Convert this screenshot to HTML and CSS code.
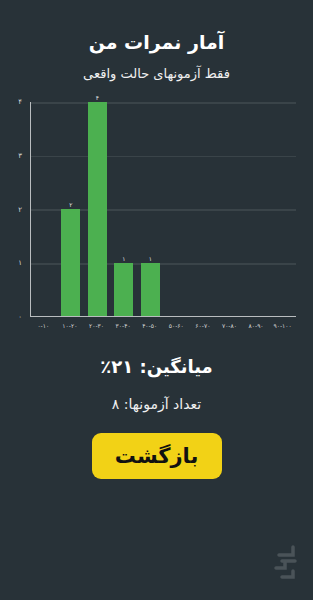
FILE: index.html
```html
<!DOCTYPE html>
<html lang="fa">
<head>
<meta charset="utf-8">
<link rel="stylesheet" href="styles.css">
</head>
<body>
<main class="screen" dir="rtl">
  <h1 class="title">آمار نمرات من</h1>
  <p class="subtitle">فقط آزمونهای حالت واقعی</p>

  <section class="chart" dir="ltr">
    <div class="yaxis">
      <span>۴</span><span>۳</span><span>۲</span><span>۱</span><span>۰</span>
    </div>
    <div class="plot">
      <div class="bin"></div>
      <div class="bin"><div class="bar" style="height:50%"><span class="val">۲</span></div></div>
      <div class="bin"><div class="bar" style="height:100%"><span class="val">۴</span></div></div>
      <div class="bin"><div class="bar" style="height:25%"><span class="val">۱</span></div></div>
      <div class="bin"><div class="bar" style="height:25%"><span class="val">۱</span></div></div>
      <div class="bin"></div>
      <div class="bin"></div>
      <div class="bin"></div>
      <div class="bin"></div>
      <div class="bin"></div>
    </div>
    <div class="xaxis">
      <span>۰-۱۰</span><span>۱۰-۲۰</span><span>۲۰-۳۰</span><span>۳۰-۴۰</span><span>۴۰-۵۰</span>
      <span>۵۰-۶۰</span><span>۶۰-۷۰</span><span>۷۰-۸۰</span><span>۸۰-۹۰</span><span>۹۰-۱۰۰</span>
    </div>
  </section>

  <p class="avg">میانگین: ۲۱٪</p>
  <p class="count">تعداد آزمونها: ۸</p>
  <button class="back">بازگشت</button>

  <svg class="watermark" width="28" height="40" viewBox="0 0 28 40" aria-hidden="true">
    <g fill="none" stroke="#4a5358" stroke-width="3.5" stroke-linecap="round">
      <path d="M20 4 V12 H6"/>
      <path d="M22 18 H9"/>
      <path d="M12 19 V25 H3"/>
      <path d="M20 28 V34 H9"/>
    </g>
  </svg>
</main>
</body>
</html>
```

FILE: styles.css
```css
html, body {
  margin: 0;
  padding: 0;
  background: #283238;
}
body {
  font-family: "DejaVu Sans", "Noto Sans", sans-serif;
  color: #ffffff;
}
.screen {
  position: relative;
  width: 313px;
  height: 600px;
  display: flex;
  flex-direction: column;
  align-items: center;
  overflow: hidden;
}
.title {
  margin: 27px 0 0;
  font-size: 19px;
  line-height: 30px;
  font-weight: bold;
}
.subtitle {
  margin: 8px 0 0;
  font-size: 13px;
  line-height: 18px;
  color: #f0f0f0;
}
.chart {
  margin-top: 19px;
  align-self: stretch;
  display: grid;
  grid-template-columns: 30px 266px;
  grid-template-rows: 215px auto;
}
.yaxis {
  display: flex;
  flex-direction: column;
  justify-content: space-between;
  align-items: flex-end;
  padding-right: 8px;
}
.yaxis span {
  display: block;
  height: 0;
  line-height: 0;
  font-size: 7px;
  color: #d8d8d8;
}
.plot {
  display: flex;
  align-items: flex-end;
  border-left: 1.5px solid #b9bdbf;
  border-bottom: 1.5px solid #b9bdbf;
  background-image: repeating-linear-gradient(to bottom, #3a4449 0, #3a4449 1.5px, transparent 1.5px, transparent 53.75px);
}
.bin {
  flex: 1;
  height: 100%;
  display: flex;
  flex-direction: column;
  justify-content: flex-end;
  align-items: stretch;
  padding: 0 3.8px;
}
.bar {
  position: relative;
  background: #4cb050;
}
.val {
  position: absolute;
  left: 0;
  right: 0;
  bottom: 100%;
  text-align: center;
  font-size: 6px;
  line-height: 8px;
  color: #e0e0e0;
}
.xaxis {
  grid-column: 2;
  display: flex;
  margin-top: 5px;
}
.xaxis span {
  flex: 1;
  text-align: center;
  font-size: 6px;
  line-height: 8px;
  color: #d8d8d8;
}
.avg {
  margin: 24px 0 0;
  font-size: 18px;
  line-height: 26px;
  font-weight: bold;
}
.count {
  margin: 14px 0 0;
  font-size: 14px;
  line-height: 20px;
  color: #f0f0f0;
}
.back {
  margin-top: 19px;
  width: 130px;
  height: 46px;
  border: none;
  border-radius: 9px;
  background: #f2d216;
  color: #111;
  font-family: "DejaVu Sans", sans-serif;
  font-size: 21px;
  font-weight: bold;
  padding: 0;
}
.watermark {
  position: absolute;
  right: 12px;
  top: 543px;
}
```
